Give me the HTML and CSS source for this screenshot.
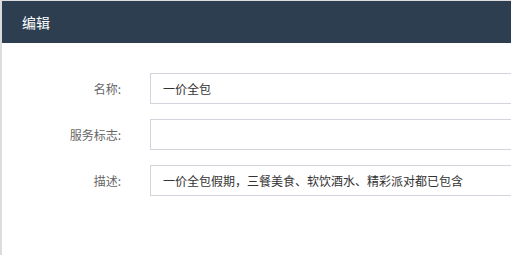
FILE: index.html
```html
<!DOCTYPE html>
<html>
<head>
    <meta charset="UTF-8">
    <title>编辑</title>
    <link rel="stylesheet" href="styles.css">
</head>
<body>
    <div class="modal">
        <div class="modal-header">编辑</div>
        <div class="modal-body">
            <div class="form-row">
                <label class="form-label" for="name">名称:</label>
                <input class="form-input" type="text" id="name" value="一价全包">
            </div>
            <div class="form-row">
                <label class="form-label" for="tag">服务标志:</label>
                <input class="form-input" type="text" id="tag" value="">
            </div>
            <div class="form-row">
                <label class="form-label" for="desc">描述:</label>
                <input class="form-input" type="text" id="desc" value="一价全包假期，三餐美食、软饮酒水、精彩派对都已包含">
            </div>
        </div>
    </div>
</body>
</html>
```

FILE: styles.css
```css
body {
    margin: 0;
    background-color: #dcdcdc;
    font-family: "Noto Sans CJK SC", "Noto Sans", sans-serif;
    height: 255px;
    overflow: hidden;
}

.modal {
    margin: 1px 0 0 2px;
    background-color: #fff;
    height: 254px;
    width: 509px;
    overflow: hidden;
}

.modal-header {
    background-color: #2c3e50; /* azul oscuro */
    color: #fff;
    font-size: 14px;
    height: 42px;
    line-height: 42px;
    padding-left: 20px;
}

.modal-body {
    padding-top: 30px;
}

.form-row {
    display: flex;
    align-items: center;
    margin-bottom: 15px;
}

.form-label {
    flex: none;
    width: 119px;
    margin-right: 29px;
    text-align: right;
    font-size: 12px;
    color: #666;
}

.form-input {
    flex: none;
    box-sizing: border-box;
    width: 420px;
    height: 31px;
    margin: 0;
    padding: 0 12px;
    border: 1px solid #d4d4dc;
    border-radius: 0;
    font-family: inherit;
    font-size: 12px;
    color: #333;
    outline: none;
}
```
